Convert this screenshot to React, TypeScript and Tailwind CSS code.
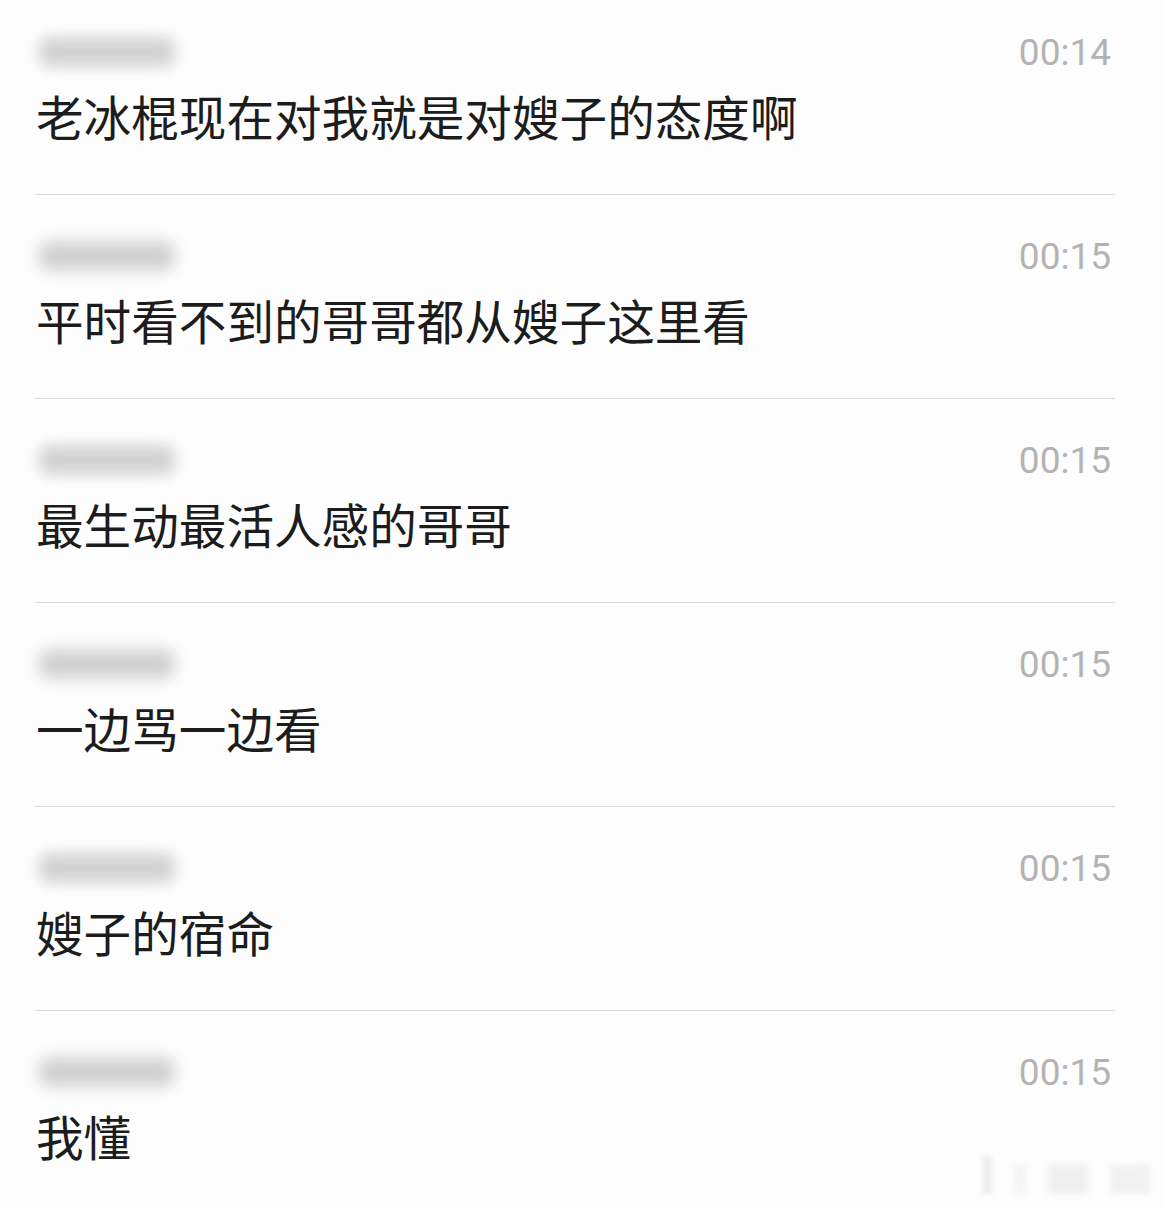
import React from 'react';

type Comment = {
  time: string;
  text: string;
};

const comments: Comment[] = [
  { time: '00:14', text: '老冰棍现在对我就是对嫂子的态度啊' },
  { time: '00:15', text: '平时看不到的哥哥都从嫂子这里看' },
  { time: '00:15', text: '最生动最活人感的哥哥' },
  { time: '00:15', text: '一边骂一边看' },
  { time: '00:15', text: '嫂子的宿命' },
  { time: '00:15', text: '我懂' },
];

const cjk = { fontFamily: '"Noto Sans CJK SC", "Noto Sans", sans-serif' };
const latin = { fontFamily: 'Roboto, "Noto Sans", sans-serif' };

const BlurredName: React.FC = () => (
  <div className="relative h-[40px] w-[150px]">
    <div className="absolute left-[4px] top-[5px] h-[30px] w-[136px] rounded-[10px] bg-[#d2d2d2] blur-[7px]" />
  </div>
);

const CommentRow: React.FC<{ comment: Comment; first: boolean }> = ({ comment, first }) => (
  <div className={`${first ? 'pt-[32px]' : 'pt-[41px]'} border-b border-[#dcdcdc] pb-[50px]`}>
    <div className="flex h-[40px] items-center justify-between">
      <BlurredName />
      <span className="pr-[4px] text-[37px] leading-none text-[#b3b3b3]" style={latin}>
        {comment.time}
      </span>
    </div>
    <p className="mt-[16px] pl-[1px] text-[47.6px] leading-[56px] text-[#1c1c1c]" style={cjk}>
      {comment.text}
    </p>
  </div>
);

export default function App() {
  return (
    <div className="relative h-[1208px] w-[1162px] overflow-hidden bg-[#fdfdfd]">
      <div className="ml-[35px] mr-[47px]">
        {comments.map((comment, i) => (
          <CommentRow key={i} comment={comment} first={i === 0} />
        ))}
      </div>

      {/* faint watermark, bottom right */}
      <div className="absolute bottom-[14px] right-[12px] flex items-end gap-[22px] opacity-50">
        <div className="h-[38px] w-[10px] bg-[#e0e0e0] blur-[2px]" />
        <div className="h-[30px] w-[12px] bg-[#ececec] blur-[3px]" />
        <div className="h-[30px] w-[40px] bg-[#e2e2e2] blur-[3px]" />
        <div className="h-[30px] w-[40px] bg-[#e6e6e6] blur-[3px]" />
      </div>
    </div>
  );
}
